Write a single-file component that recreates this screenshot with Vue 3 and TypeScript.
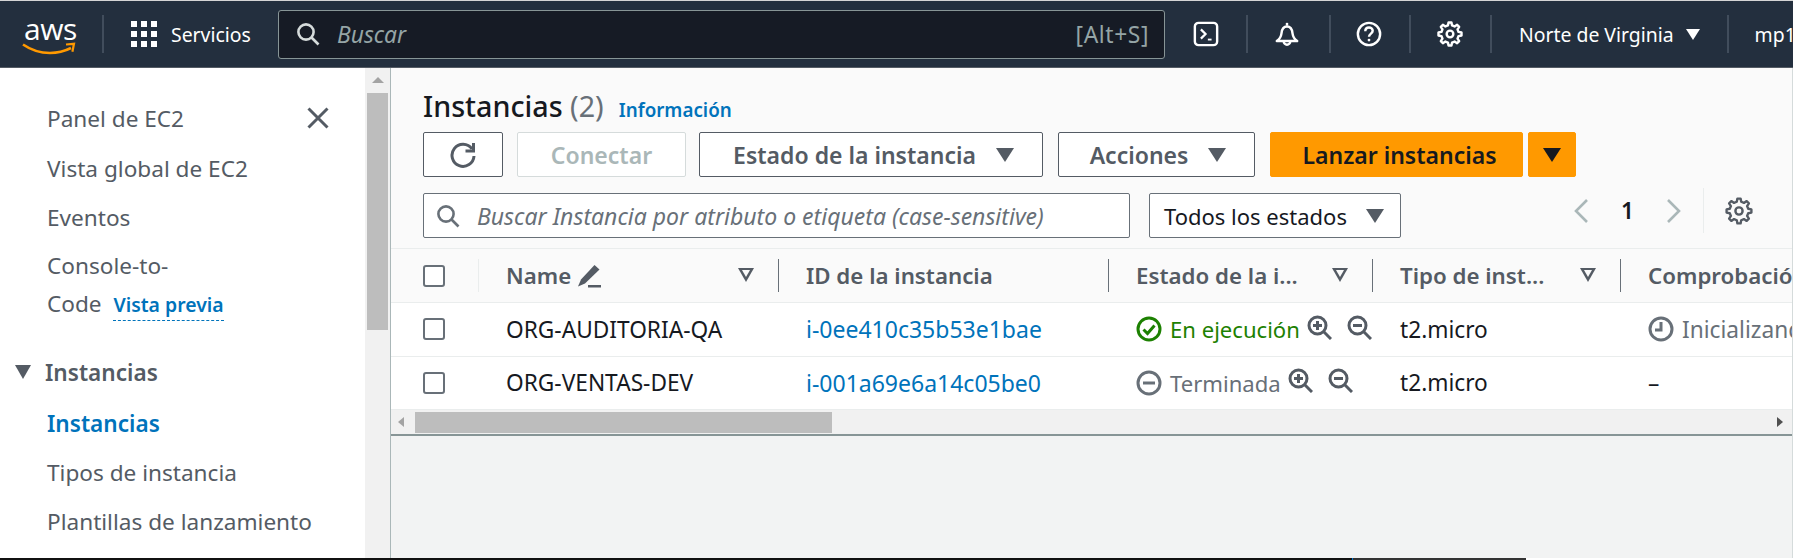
<template>
  <div class="app">
    <header class="topbar">
      <div class="logo">
        <span class="logo-text">aws</span>
        <svg class="logo-smile" width="54" height="14" viewBox="0 0 54 14">
          <path d="M1 2.5C9 8 18 11 28 11c8 0 15-2 21-5" fill="none" stroke="#f90" stroke-width="2.6" />
          <path d="M44 2.5l8-.7-1.6 8" fill="none" stroke="#f90" stroke-width="2.2" />
        </svg>
      </div>
      <i class="sep sep-logo"></i>
      <svg class="grid-icon" width="26" height="26" viewBox="0 0 26 26" fill="#fff">
        <template v-for="y in [0, 10, 20]" :key="y">
          <rect v-for="x in [0, 10, 20]" :key="x" :x="x" :y="y" width="6" height="6" />
        </template>
      </svg>
      <span class="services">Servicios</span>
      <div class="global-search">
        <svg width="24" height="24" viewBox="0 0 24 24" fill="none" stroke="#d5dbdb" stroke-width="2.6">
          <circle cx="10" cy="10" r="7.6" />
          <path d="M15.5 15.5l7 7" />
        </svg>
        <span class="placeholder">Buscar</span>
        <span class="shortcut">[Alt+S]</span>
      </div>
      <button class="top-icon first">
        <svg width="26" height="26" viewBox="0 0 28 28" fill="none" stroke="#fff" stroke-width="2.6">
          <rect x="2" y="2" width="24" height="24" rx="4" />
          <path d="M8.5 9l5 5-5 5" stroke-width="2.4" />
          <path d="M16 20h4" stroke-width="2" />
        </svg>
      </button>
      <i class="sep"></i>
      <button class="top-icon bell">
        <svg width="26" height="26" viewBox="0 0 28 28" fill="none" stroke="#fff" stroke-width="2.6">
          <path d="M3 21.5c3-2 4.500-4 5-8 .5-5 2.500-7.500 6-7.500s5.500 2.500 6 7.500c.5 4 2 6 5 8z" stroke-linejoin="round" />
          <path d="M14 2v3" />
          <path d="M10.500 22a3.500 3.500 0 0 0 7 0" />
        </svg>
      </button>
      <i class="sep"></i>
      <button class="top-icon help">
        <svg width="26" height="26" viewBox="0 0 28 28" fill="none" stroke="#fff" stroke-width="2.6">
          <circle cx="14" cy="14" r="12" />
          <path d="M10 11c0-2.500 1.800-4 4-4s4 1.500 4 3.600c0 3-4 3-4 6.400" />
          <circle cx="14" cy="20.500" r="1.500" fill="#fff" stroke="none" />
        </svg>
      </button>
      <i class="sep"></i>
      <button class="top-icon">
        <svg width="26" height="26" viewBox="0 0 28 28" fill="none" stroke="#fff" stroke-width="2.6" stroke-linejoin="round">
          <path :d="gearPath" />
          <circle cx="14" cy="14" r="3.600" />
        </svg>
      </button>
      <i class="sep"></i>
      <span class="region">Norte de Virginia</span>
      <i class="caret caret-white"></i>
      <i class="sep sep-user"></i>
      <span class="user">mp1</span>
    </header>

    <div class="body">
      <aside class="sidebar">
        <button class="close" aria-label="Cerrar">
          <svg width="22" height="22" viewBox="0 0 22 22" stroke="#545b64" stroke-width="3">
            <path d="M1.500 1.500l19 19M20.500 1.500l-19 19" />
          </svg>
        </button>
        <nav class="nav">
          <a class="nav-item">Panel de EC2</a>
          <a class="nav-item">Vista global de EC2</a>
          <a class="nav-item">Eventos</a>
          <a class="nav-item nav-wrap">Console-to-<br />Code <span class="preview">Vista previa</span></a>
          <div class="nav-section"><i class="caret caret-grey"></i>Instancias</div>
          <a class="nav-item active">Instancias</a>
          <a class="nav-item">Tipos de instancia</a>
          <a class="nav-item">Plantillas de lanzamiento</a>
        </nav>
      </aside>
      <div class="side-scroll">
        <i class="arrow-up"></i>
        <div class="side-thumb"></div>
      </div>

      <main class="main">
        <section class="panel">
          <div class="title-row">
            <h1>Instancias <span class="count">(2)</span></h1>
            <a class="info">Información</a>
          </div>
          <div class="actions">
            <button class="btn btn-refresh">
              <svg width="28" height="28" viewBox="0 0 28 28" fill="none" stroke="#545b64" stroke-width="3">
                <path d="M23 8a11 11 0 1 0 2 7" />
                <path d="M24.500 2v8h-8" />
              </svg>
            </button>
            <button class="btn btn-connect" disabled>Conectar</button>
            <button class="btn btn-state">Estado de la instancia<i class="caret caret-grey"></i></button>
            <button class="btn btn-actions">Acciones<i class="caret caret-grey"></i></button>
            <button class="btn btn-launch">Lanzar instancias</button>
            <button class="btn btn-split"><i class="caret caret-dark"></i></button>
          </div>
          <div class="filters">
            <div class="filter-input">
              <svg width="24" height="24" viewBox="0 0 24 24" fill="none" stroke="#687078" stroke-width="2.600">
                <circle cx="10" cy="10" r="7.600" />
                <path d="M15.500 15.500l7 7" />
              </svg>
              <span>Buscar Instancia por atributo o etiqueta (case-sensitive)</span>
            </div>
            <div class="filter-select">Todos los estados<i class="caret caret-grey"></i></div>
            <div class="pager">
              <svg width="16" height="26" viewBox="0 0 16 26" fill="none" stroke="#aab7b8" stroke-width="2.600"><path d="M14 2L3 13l11 11" /></svg>
              <span class="page">1</span>
              <svg width="16" height="26" viewBox="0 0 16 26" fill="none" stroke="#aab7b8" stroke-width="2.600"><path d="M2 2l11 11L2 24" /></svg>
              <i class="pager-sep"></i>
              <svg width="28" height="28" viewBox="0 0 28 28" fill="none" stroke="#545b64" stroke-width="2.400" stroke-linejoin="round">
                <path :d="gearPath" />
                <circle cx="14" cy="14" r="3.600" />
              </svg>
            </div>
          </div>
        </section>

        <section class="table">
          <div class="tr thead">
            <div class="td cell-check"><i class="check"></i></div>
            <div class="td th first-col">
              Name
              <svg class="pen" width="24" height="24" viewBox="0 0 24 24" fill="#545b64">
                <path d="M17.500 1l5 4.500L8 19.500 1 22.500l3-7z" />
                <rect x="11" y="21" width="13" height="2.500" />
              </svg>
              <i class="sort"></i>
            </div>
            <div class="td th">ID de la instancia</div>
            <div class="td th">Estado de la i...<i class="sort"></i></div>
            <div class="td th">Tipo de inst...<i class="sort"></i></div>
            <div class="td th">Comprobación</div>
          </div>
          <div v-for="row in rows" :key="row.id" class="tr">
            <div class="td cell-check"><i class="check"></i></div>
            <div class="td first-col">{{ row.name }}</div>
            <div class="td link">{{ row.id }}</div>
            <div class="td state" :class="row.running ? 'running' : 'stopped'">
              <svg class="status" width="26" height="26" viewBox="0 0 26 26" fill="none" stroke="currentColor" stroke-width="3">
                <circle cx="13" cy="13" r="11" />
                <path v-if="row.running" d="M7.500 13.500l4 4 7-8" />
                <path v-else d="M7 13h12" />
              </svg>
              <span>{{ row.state }}</span>
              <svg class="zoom-in" width="25" height="25" viewBox="0 0 25 25" fill="none" stroke="#545b64" stroke-width="3">
                <circle cx="10.500" cy="10.500" r="8.500" />
                <path d="M17 17l7 7" />
                <path d="M6 10.500h9M10.500 6v9" />
              </svg>
              <svg class="zoom-out" width="25" height="25" viewBox="0 0 25 25" fill="none" stroke="#545b64" stroke-width="3">
                <circle cx="10.500" cy="10.500" r="8.500" />
                <path d="M17 17l7 7" />
                <path d="M6 10.500h9" />
              </svg>
            </div>
            <div class="td">t2.micro</div>
            <div class="td check-col">
              <template v-if="row.running">
                <svg class="status" width="26" height="26" viewBox="0 0 26 26" fill="none" stroke="currentColor" stroke-width="3">
                  <circle cx="13" cy="13" r="11" />
                  <path d="M13 6v8H7" />
                </svg>
                <span>Inicializando</span>
              </template>
              <span v-else class="dash">–</span>
            </div>
          </div>
          <div class="h-scroll">
            <i class="arrow-left"></i>
            <div class="h-thumb"></div>
            <i class="arrow-right"></i>
          </div>
        </section>
      </main>
    </div>

    <footer class="taskbar">
      <div class="task-black"></div>
      <div class="task-active"></div>
    </footer>
  </div>
</template>

<script setup lang="ts">
type Row = {
  name: string;
  id: string;
  state: string;
  running: boolean;
};

const rows: Row[] = [
  { name: "ORG-AUDITORIA-QA", id: "i-0ee410c35b53e1bae", state: "En ejecución", running: true },
  { name: "ORG-VENTAS-DEV", id: "i-001a69e6a14c05be0", state: "Terminada", running: false },
];

// cog outline, 8 teeth around the 14,14 centre
function buildGear(teeth: number, outer: number, inner: number) {
  const pts: string[] = [];
  const step = (Math.PI * 2) / teeth;
  for (let i = 0; i < teeth; i++) {
    const a = i * step - Math.PI / 2;
    const offsets: [number, number][] = [
      [-0.3, inner],
      [-0.16, outer],
      [0.16, outer],
      [0.3, inner],
    ];
    for (const [o, r] of offsets) {
      const x = 14 + Math.cos(a + o * step) * r;
      const y = 14 + Math.sin(a + o * step) * r;
      pts.push(`${x.toFixed(2)} ${y.toFixed(2)}`);
    }
  }
  return `M${pts.join("L")}Z`;
}

const gearPath = buildGear(8, 12.5, 9.5);
</script>

<style>
html,
body {
  margin: 0;
  background: #fff;
}
</style>

<style scoped>
.app {
  width: 1793px;
  height: 560px;
  display: flex;
  flex-direction: column;
  overflow: hidden;
  font-family: "Noto Sans", "Open Sans", sans-serif;
  color: #16191f;
  background: #fff;
}
button {
  font-family: inherit;
  padding: 0;
  border: 0;
  background: none;
}
i {
  display: block;
  font-style: normal;
}

/* top bar */
.topbar {
  height: 66px;
  flex: none;
  display: flex;
  align-items: center;
  background: #232f3e;
  border-top: 1px solid #d5d5d5;
  border-bottom: 1px solid #545b64;
  color: #fff;
  font-size: 19.4px;
}
.topbar > * {
  flex: none;
}
.logo {
  width: 54px;
  margin-left: 22px;
  position: relative;
  height: 48px;
}
.logo-text {
  position: absolute;
  left: 2px;
  top: 2px;
  font-family: "Open Sans", sans-serif;
  font-size: 30px;
  line-height: 34px;
  letter-spacing: -0.5px;
}
.logo-smile {
  position: absolute;
  left: 0;
  top: 32px;
}
.sep {
  width: 2px;
  height: 38px;
  background: #414d5c;
}
.sep-logo {
  margin-left: 26px;
}
.grid-icon {
  margin-left: 27px;
}
.services {
  margin-left: 14px;
  width: 80px;
  white-space: nowrap;
}
.global-search {
  width: 887px;
  height: 49px;
  box-sizing: border-box;
  margin-left: 27px;
  display: flex;
  align-items: center;
  padding: 0 15px 0 17px;
  background: #161b25;
  border: 1px solid #879596;
  border-radius: 3px;
}
.placeholder {
  margin-left: 17px;
  font-size: 22.8px;
  font-style: italic;
  color: #95a5a6;
}
.shortcut {
  margin-left: auto;
  font-size: 22.8px;
  letter-spacing: 0.6px;
  color: #95a5a6;
}
.top-icon {
  display: flex;
  width: 26px;
  margin: 0 27px 0 26px;
}
.top-icon.first {
  margin-left: 28px;
}
.top-icon.bell {
  margin-right: 29px;
}
.top-icon.help {
  margin-left: 25px;
}
.region {
  margin-left: 27px;
  white-space: nowrap;
}
.caret {
  width: 0;
  height: 0;
  border-style: solid;
  border-width: 14px 9px 0;
  border-color: #545b64 transparent transparent;
}
.caret-white {
  margin-left: 12px;
  border-width: 11px 7px 0;
  border-top-color: #fff;
}
.caret-grey {
  border-top-color: #545b64;
}
.caret-dark {
  border-top-color: #16191f;
}
.sep-user {
  margin-left: 27px;
}
.user {
  margin-left: 26px;
}

/* side nav */
.body {
  flex: 1;
  min-height: 0;
  display: flex;
}
.sidebar {
  width: 365px;
  flex: none;
  position: relative;
  font-size: 22.6px;
  color: #545b64;
}
.close {
  position: absolute;
  left: 307px;
  top: 39px;
  display: flex;
}
.nav {
  padding-top: 26px;
}
.nav-item {
  display: block;
  margin-left: 47px;
  line-height: 49.500px;
  white-space: nowrap;
}
.nav-wrap {
  line-height: 38px;
  padding: 4px 0 0;
  margin-bottom: 24px;
}
.preview {
  margin-left: 6px;
  font-size: 19.4px;
  font-weight: 600;
  color: #0073bb;
  border-bottom: 1px dashed #0073bb;
  padding-bottom: 2px;
}
.nav-section {
  display: flex;
  align-items: center;
  height: 49px;
  margin-left: 15px;
  font-weight: 600;
}
.nav-section .caret {
  margin-right: 14px;
  border-width: 14px 8.5px 0;
}
.active {
  color: #0073bb;
  font-weight: 600;
  margin-top: 2px;
  margin-bottom: -0.5px;
}
.side-scroll {
  width: 25px;
  flex: none;
  background: #f1f1f1;
  padding: 9px 2px 0;
  box-sizing: border-box;
}
.arrow-up {
  width: 0;
  margin: 0 auto;
  border-style: solid;
  border-width: 0 6px 6px;
  border-color: transparent transparent #a3a3a3;
}
.side-thumb {
  height: 237px;
  margin-top: 10px;
  background: #bdbdbd;
}

/* main panel */
.main {
  flex: 1;
  min-width: 0;
  overflow: hidden;
  background: #f2f3f3;
  border-left: 1px solid #aab7b8;
  border-right: 1px solid #d5dbdb;
}
.panel {
  height: 181px;
  box-sizing: border-box;
  padding: 0 39px 0 32px;
  background: #fafafa;
  border-bottom: 1px solid #eaeded;
}
.title-row {
  height: 64px;
  display: flex;
  align-items: baseline;
  padding-top: 20px;
  box-sizing: border-box;
}
h1 {
  margin: 0;
  font-size: 28.7px;
  font-weight: 500;
  line-height: 36px;
  white-space: nowrap;
}
.count {
  font-weight: 400;
  color: #687078;
}
.info {
  margin-left: 15px;
  font-size: 18.8px;
  font-weight: 600;
  color: #0073bb;
}
.actions {
  display: flex;
  height: 45px;
}
.btn {
  height: 45px;
  box-sizing: border-box;
  display: flex;
  align-items: center;
  justify-content: center;
  font-size: 23px;
  font-weight: 600;
  color: #545b64;
  background: #fff;
  border: 1px solid #545b64;
  border-radius: 2px;
  white-space: nowrap;
}
.btn .caret {
  margin-left: 20px;
}
.btn-refresh {
  width: 80px;
}
.btn-connect {
  width: 169px;
  margin-left: 14px;
  color: #aab7b8;
  border-color: #d5dbdb;
}
.btn-state {
  width: 344px;
  margin-left: 13px;
  padding-left: 5px;
}
.btn-actions {
  width: 197px;
  margin-left: 15px;
  padding-left: 3px;
}
.btn-launch {
  width: 253px;
  margin-left: 15px;
  padding-left: 6px;
  color: #16191f;
  background: #f90;
  border-color: #f90;
}
.btn-split {
  width: 48px;
  margin-left: 5px;
  background: #f90;
  border-color: #f90;
}
.btn-split .caret {
  margin-left: 0;
}
.filters {
  display: flex;
  margin-top: 16px;
  height: 45px;
}
.filter-input {
  width: 707px;
  box-sizing: border-box;
  display: flex;
  align-items: center;
  gap: 17px;
  padding-left: 12px;
  background: #fff;
  border: 1px solid #687078;
  border-radius: 2px;
  font-size: 23px;
  font-style: italic;
  color: #687078;
  white-space: nowrap;
}
.filter-select {
  width: 252px;
  margin-left: 19px;
  box-sizing: border-box;
  display: flex;
  align-items: center;
  justify-content: space-between;
  padding: 0 16px 0 14px;
  background: #fff;
  border: 1px solid #687078;
  border-radius: 2px;
  font-size: 22px;
}
.pager {
  margin-left: auto;
  margin-top: -5px;
  height: 45px;
  display: flex;
  align-items: center;
}
.page {
  width: 77px;
  text-align: center;
  font-size: 22.6px;
  font-weight: 600;
}
.pager-sep {
  width: 1px;
  height: 45px;
  margin: 0 21px;
  background: #eaeded;
}

/* instances table */
.table {
  overflow: hidden;
}
.tr {
  display: grid;
  grid-template-columns: 87px 300px 330px 264px 248px 1fr;
  height: 53.5px;
  box-sizing: border-box;
  background: #fff;
  border-bottom: 1px solid #eaeded;
  font-size: 22.7px;
}
.thead {
  height: 54px;
  background: #fafafa;
}
.td {
  display: flex;
  align-items: center;
  min-width: 0;
  padding-left: 28px;
  white-space: nowrap;
  position: relative;
}
.cell-check {
  padding-left: 32px;
}
.check {
  width: 22px;
  height: 22px;
  box-sizing: border-box;
  border: 2px solid #687078;
  border-radius: 3px;
  background: #fff;
}
.th {
  font-size: 22.3px;
  font-weight: 600;
  color: #545b64;
}
.th::before {
  content: "";
  position: absolute;
  left: 0;
  top: 10px;
  bottom: 10px;
  width: 1px;
  background: #687078;
}
.first-col::before {
  background: #eaeded;
}
.pen {
  margin-left: 6px;
}
.sort {
  position: absolute;
  right: 24px;
  top: 19px;
  width: 0;
  height: 0;
  border-style: solid;
  border-width: 14px 8px 0;
  border-color: #545b64 transparent transparent;
}
.sort::after {
  content: "";
  position: absolute;
  left: -4px;
  top: -12px;
  border-style: solid;
  border-width: 7px 4px 0;
  border-color: #fafafa transparent transparent;
}
.link {
  color: #0073bb;
  font-size: 23px;
}
.state {
  font-size: 22.1px;
}
.running {
  color: #1d8102;
}
.stopped,
.check-col {
  color: #687078;
}
.status {
  flex: none;
  margin-right: 8px;
}
.zoom-in {
  flex: none;
  margin: -4px 0 0 7px;
}
.zoom-out {
  flex: none;
  margin: -4px 0 0 15px;
}
.dash {
  color: #16191f;
}
.h-scroll {
  height: 24px;
  display: flex;
  align-items: center;
  background: #f1f1f1;
  border-bottom: 2px solid #879596;
}
.arrow-left {
  margin-left: 7px;
  border-style: solid;
  border-width: 5px 6px 5px 0;
  border-color: transparent #a3a3a3 transparent transparent;
}
.h-thumb {
  width: 417px;
  height: 21px;
  margin: 1px 0 0 11px;
  background: #bdbdbd;
}
.arrow-right {
  margin-left: auto;
  margin-right: 9px;
  border-style: solid;
  border-width: 5px 0 5px 6px;
  border-color: transparent transparent transparent #505050;
}

/* OS taskbar cut off at the bottom */
.taskbar {
  height: 2px;
  flex: none;
  display: flex;
}
.task-black {
  width: 1352px;
  background: #111;
}
.task-active {
  width: 173px;
  background: #333;
  border-left: 1px solid #0078d4;
}
</style>
